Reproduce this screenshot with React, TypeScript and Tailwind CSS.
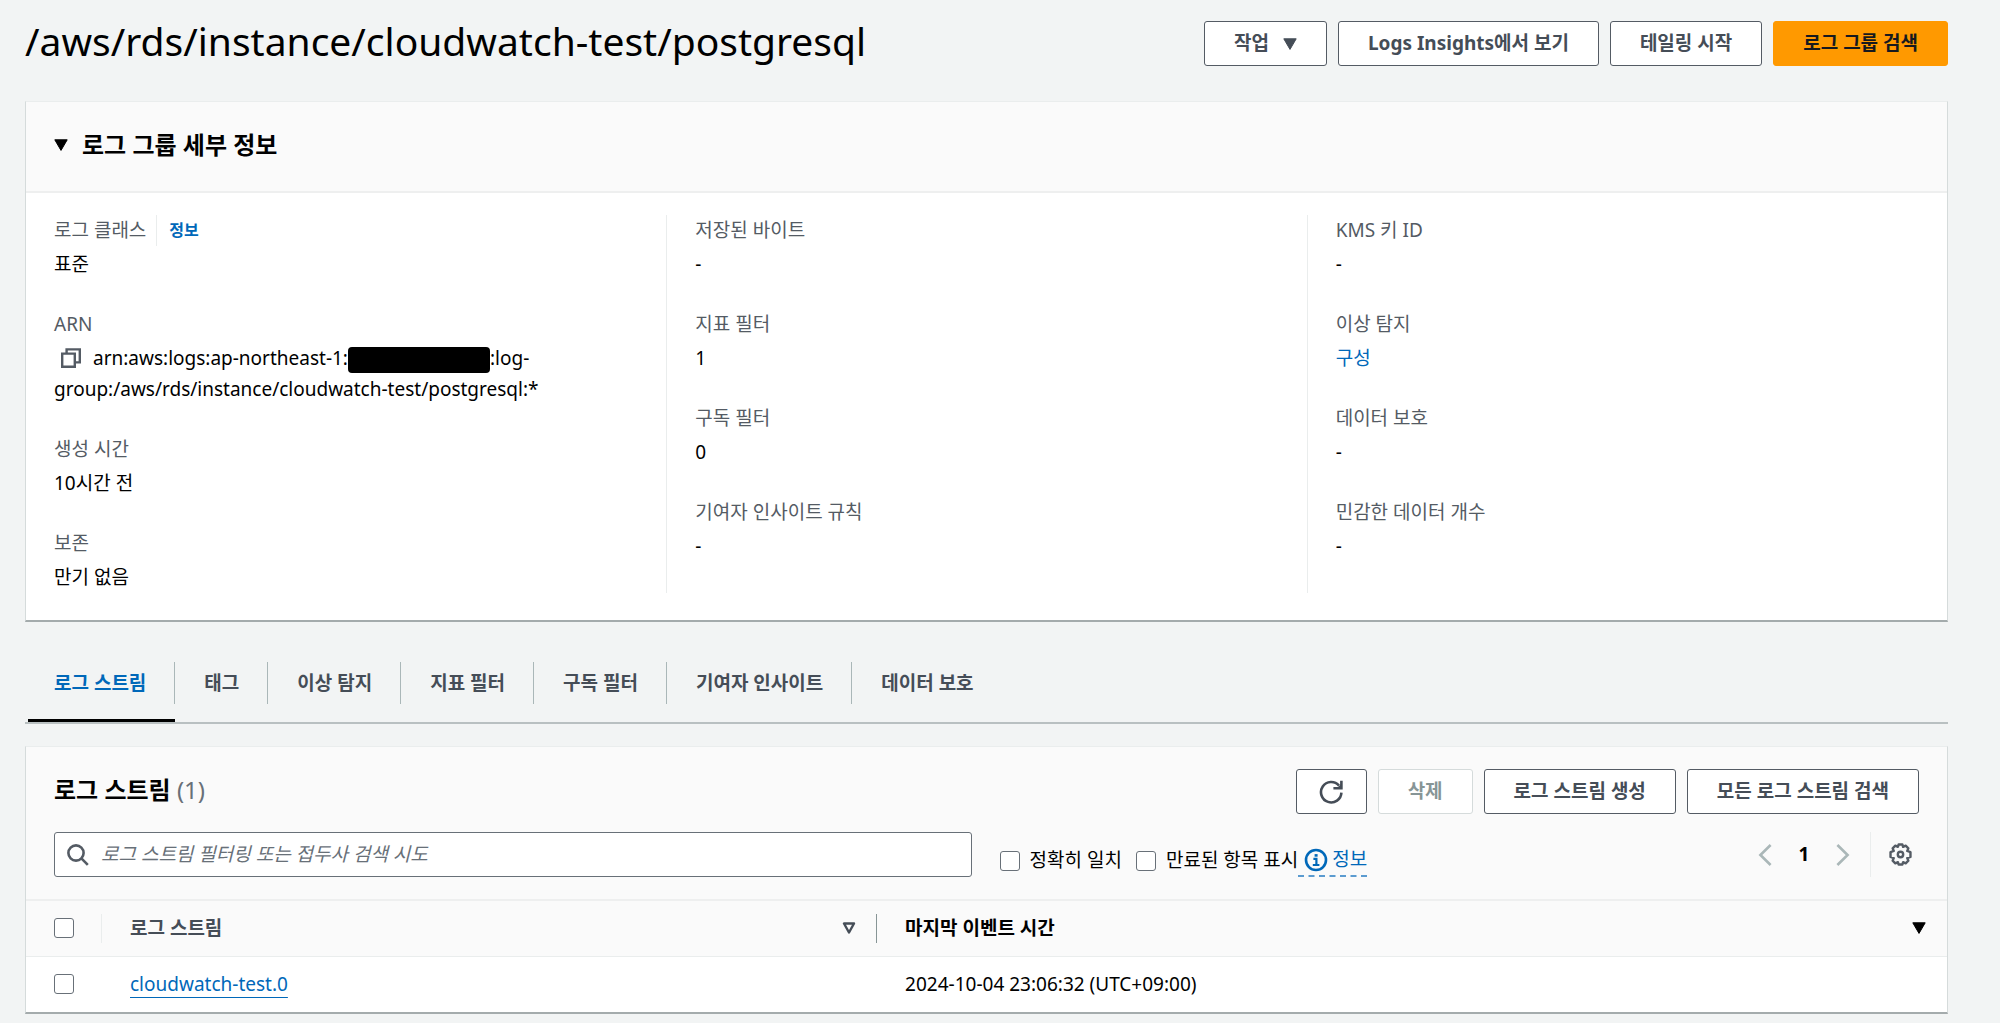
import React, { useState } from 'react';
import clsx from 'clsx';

interface Detail {
  label: string;
  value: React.ReactNode;
  info?: boolean;
}

const ARN = (
  <>
    <button type="button" aria-label="ARN 복사" className="ml-[7px] mr-3 inline-block align-[-3px] text-[#545b64]">
      <svg viewBox="0 0 20 20" className="block w-5 h-5" fill="none" stroke="currentColor" strokeWidth="2.4">
        <path d="M1.2 5.6h12.6v13.2H1.2z" />
        <path d="M5.6 5.6V1.4h13.2v13h-5" />
      </svg>
    </button>
    arn:aws:logs:ap-northeast-1:
    <span className="inline-block w-[142px] h-[26px] rounded-[4px] bg-black align-middle" />
    :log-
    <br />
    group:/aws/rds/instance/cloudwatch-test/postgresql:*
  </>
);

const COLUMNS: Detail[][] = [
  [
    { label: '로그 클래스', value: '표준', info: true },
    { label: 'ARN', value: ARN },
    { label: '생성 시간', value: '10시간 전' },
    { label: '보존', value: '만기 없음' },
  ],
  [
    { label: '저장된 바이트', value: '-' },
    { label: '지표 필터', value: '1' },
    { label: '구독 필터', value: '0' },
    { label: '기여자 인사이트 규칙', value: '-' },
  ],
  [
    { label: 'KMS 키 ID', value: '-' },
    { label: '이상 탐지', value: <a href="#anomaly" className="text-[#0068b9]">구성</a> },
    { label: '데이터 보호', value: '-' },
    { label: '민감한 데이터 개수', value: '-' },
  ],
];

const TABS = ['로그 스트림', '태그', '이상 탐지', '지표 필터', '구독 필터', '기여자 인사이트', '데이터 보호'];

const CARD = 'bg-white border-x border-t border-x-[#d5dbdb] border-t-[#eaeded] border-b-2 border-b-[#a4abac]';

const Caret = ({ outline = false }: { outline?: boolean }) => (
  <svg viewBox="0 0 14 12" className="block w-[14px] h-3 shrink-0" fill={outline ? 'none' : 'currentColor'} stroke="currentColor" strokeWidth={outline ? 2.4 : 1} strokeLinejoin="round">
    <path d={outline ? 'M2 1.5h10L7 10.5z' : 'M.8.8h12.4L7 11.4z'} />
  </svg>
);

interface ButtonProps extends React.ButtonHTMLAttributes<HTMLButtonElement> {
  primary?: boolean;
}

const Button = ({ primary, disabled, className, children, ...rest }: ButtonProps) => (
  <button
    type="button"
    disabled={disabled}
    className={clsx(
      'flex items-center justify-center h-[45px] px-[29px] rounded-[3px] border font-bold whitespace-nowrap',
      primary && 'bg-[#ff9900] border-[#ff9900] text-[#16191f]',
      !primary && !disabled && 'bg-white border-[#545b64] text-[#454d57]',
      disabled && 'bg-white border-[#d5dbdb] text-[#879596]',
      className,
    )}
    {...rest}
  >
    {children}
  </button>
);

const Checkbox = (props: React.InputHTMLAttributes<HTMLInputElement>) => (
  <input
    type="checkbox"
    className="appearance-none block w-5 h-5 shrink-0 rounded-[3px] border border-[#687078] bg-white checked:bg-[#0068b9]"
    {...props}
  />
);

const App: React.FC = () => {
  const [tab, setTab] = useState(TABS[0]);
  const [query, setQuery] = useState('');

  return (
    <div className="min-h-screen bg-[#f2f4f4] pl-[25px] pr-[52px] pt-[21px] pb-[8px] font-['Noto_Sans','Noto_Sans_CJK_KR',sans-serif] text-[19px] leading-[31px] text-black">
      {/* Header */}
      <header className="flex items-start justify-between">
        <h1 className="text-[39px] leading-[40px]">/aws/rds/instance/cloudwatch-test/postgresql</h1>
        <div className="flex gap-[11px]">
          <Button>
            작업
            <span className="ml-[14px]"><Caret /></span>
          </Button>
          <Button>Logs Insights에서 보기</Button>
          <Button>테일링 시작</Button>
          <Button primary>로그 그룹 검색</Button>
        </div>
      </header>

      {/* Log group details */}
      <section className={clsx(CARD, 'mt-[35px]')}>
        <div className="h-[91px] px-7 pb-1 flex items-center gap-[14px] bg-[#fafafa] border-b-2 border-[#eeefef]">
          <Caret />
          <h2 className="text-[24px] font-bold">로그 그룹 세부 정보</h2>
        </div>
        <div className="grid grid-cols-3 pt-[22px] pb-[27px]">
          {COLUMNS.map((items, i) => (
            <dl key={i} className={clsx('flex flex-col gap-[29px] px-7', i > 0 && 'border-l border-[#eaeded]')}>
              {items.map(item => (
                <div key={item.label}>
                  <dt className="flex items-center text-[#545b64]">
                    {item.label}
                    {item.info && (
                      <a href="#info" className="ml-[10px] pl-3 border-l border-[#eaeded] text-[16px] font-bold text-[#0068b9]">정보</a>
                    )}
                  </dt>
                  <dd className="mt-[3px]">{item.value}</dd>
                </div>
              ))}
            </dl>
          ))}
        </div>
      </section>

      {/* Tabs */}
      <nav role="tablist" className="mt-[22px] pl-[3px] flex border-b-2 border-[#b9c0c1]">
        {TABS.map(name => (
          <button
            key={name}
            type="button"
            role="tab"
            aria-selected={tab === name}
            onClick={() => setTab(name)}
            className="group flex flex-col pt-[18px] font-bold text-[#454d57] aria-selected:text-[#0068b9]"
          >
            <span className="flex items-center h-[42px] pl-[29px] pr-7 border-r border-[#aab7b8] group-first:pl-[26px] group-last:border-r-0">{name}</span>
            <span className="mt-[15px] h-[3px] w-full group-aria-selected:bg-black" />
          </button>
        ))}
      </nav>

      {/* Log streams */}
      <section className={clsx(CARD, 'mt-[22px]')}>
        <div className="px-7 py-[22px] bg-[#fafafa] border-b-2 border-[#eeefef]">
          <div className="flex items-center justify-between">
            <h2 className="pb-1 text-[24px] font-bold">
              로그 스트림 <span className="font-normal text-[#687078]">(1)</span>
            </h2>
            <div className="flex gap-[11px]">
              <Button aria-label="새로 고침" className="w-[71px]">
                <svg viewBox="0 0 24 24" className="w-6 h-6 shrink-0" fill="none" stroke="currentColor" strokeWidth="2.6">
                  <path d="M22.4 12.6A10.2 10.2 0 1 1 20 5.6" />
                  <path d="M22.4.8v7.4h-8" />
                  <path d="M17.6 8.2l4.8-4.4v4.4z" fill="currentColor" stroke="none" />
                </svg>
              </Button>
              <Button disabled>삭제</Button>
              <Button>로그 스트림 생성</Button>
              <Button>모든 로그 스트림 검색</Button>
            </div>
          </div>

          <div className="mt-[18px] flex items-center">
            <div className="w-[49.2%] h-[45px] px-3 flex items-center gap-3 bg-white border border-[#687078] rounded-[3px]">
              <svg viewBox="0 0 22 22" className="w-[22px] h-[22px] shrink-0 text-[#545b64]" fill="none" stroke="currentColor" strokeWidth="2.6">
                <circle cx="9" cy="9" r="7.6" />
                <path d="M14.4 14.4l6.4 6.4" />
              </svg>
              <input
                type="text"
                aria-label="로그 스트림 필터링"
                value={query}
                onChange={e => setQuery(e.target.value)}
                placeholder="로그 스트림 필터링 또는 접두사 검색 시도"
                className="grow bg-transparent outline-none placeholder:italic placeholder:text-[#687078]"
              />
            </div>
            <div className="ml-7 mt-3 flex items-center gap-[14px]">
              <label className="flex items-center gap-[10px]">
                <Checkbox />
                정확히 일치
              </label>
              <div className="flex items-center">
                <label className="flex items-center gap-[10px]">
                  <Checkbox />
                  만료된 항목 표시
                </label>
                <a href="#expired-info" className="flex items-center gap-1 pl-[6px] border-b-2 border-dashed border-[#5b9bd0] text-[#0068b9]">
                  <svg viewBox="0 0 24 24" className="w-6 h-6" fill="none" stroke="currentColor" strokeWidth="2.6">
                    <circle cx="12" cy="12" r="10" />
                    <path d="M9.4 10.8h3v5.6M8.8 17h6.6" strokeWidth="2.2" />
                    <path d="M10.6 7.4h3" />
                  </svg>
                  정보
                </a>
              </div>
            </div>
            <div className="ml-auto flex items-center">
              <button type="button" aria-label="이전 페이지" className="text-[#aab7b8]">
                <svg viewBox="0 0 14 22" className="w-[14px] h-[22px]" fill="none" stroke="currentColor" strokeWidth="2.6">
                  <path d="M12.6 1L2.4 11l10.2 10" />
                </svg>
              </button>
              <button type="button" className="w-[64px] font-bold">1</button>
              <button type="button" aria-label="다음 페이지" className="text-[#aab7b8]">
                <svg viewBox="0 0 14 22" className="w-[14px] h-[22px]" fill="none" stroke="currentColor" strokeWidth="2.6">
                  <path d="M1.4 1l10.2 10L1.4 21" />
                </svg>
              </button>
              <div className="ml-5 pl-[18px] pr-[7px] h-[45px] flex items-center border-l border-[#eaeded]">
                <button type="button" aria-label="기본 설정" className="text-[#545b64]">
                  <svg viewBox="0 0 24 24" className="w-[23px] h-[23px]" fill="none" stroke="currentColor" strokeWidth="2.5" strokeLinejoin="round">
                    <path d="M10 1.6h4l.7 2.4 2.7-1.2 2.8 2.8L19 8.3l3.4 1.2v5L19 15.7l1.2 2.7-2.8 2.8-2.7-1.2-.7 2.4h-4L9.3 20l-2.7 1.2-2.8-2.8L5 15.7l-3.4-1.2v-5L5 8.3 3.8 5.6l2.8-2.8L9.3 4z" />
                    <circle cx="12" cy="12" r="2.8" />
                  </svg>
                </button>
              </div>
            </div>
          </div>
        </div>

        <table className="w-full table-fixed text-left">
          <thead className="bg-[#fafafa]">
            <tr className="h-[55px] border-b border-[#eaeded]">
              <th className="w-[76px] p-0">
                <div className="h-[29px] pl-7 flex items-center border-r border-[#eaeded]">
                  <Checkbox aria-label="모두 선택" />
                </div>
              </th>
              <th className="w-[40.35%] p-0">
                <div className="h-[29px] pl-7 pr-[20px] flex items-center justify-between border-r border-[#879596] text-[#454d57]">
                  로그 스트림
                  <Caret outline />
                </div>
              </th>
              <th className="p-0">
                <div className="h-[29px] pl-7 pr-[21px] flex items-center justify-between">
                  마지막 이벤트 시간
                  <Caret />
                </div>
              </th>
            </tr>
          </thead>
          <tbody>
            <tr className="h-14">
              <td className="pl-7">
                <Checkbox aria-label="cloudwatch-test.0 선택" />
              </td>
              <td className="pl-7">
                <a href="#stream" className="text-[#0068b9] underline underline-offset-[6px]">cloudwatch-test.0</a>
              </td>
              <td className="pl-7">2024-10-04 23:06:32 (UTC+09:00)</td>
            </tr>
          </tbody>
        </table>
      </section>
    </div>
  );
};

export default App;
